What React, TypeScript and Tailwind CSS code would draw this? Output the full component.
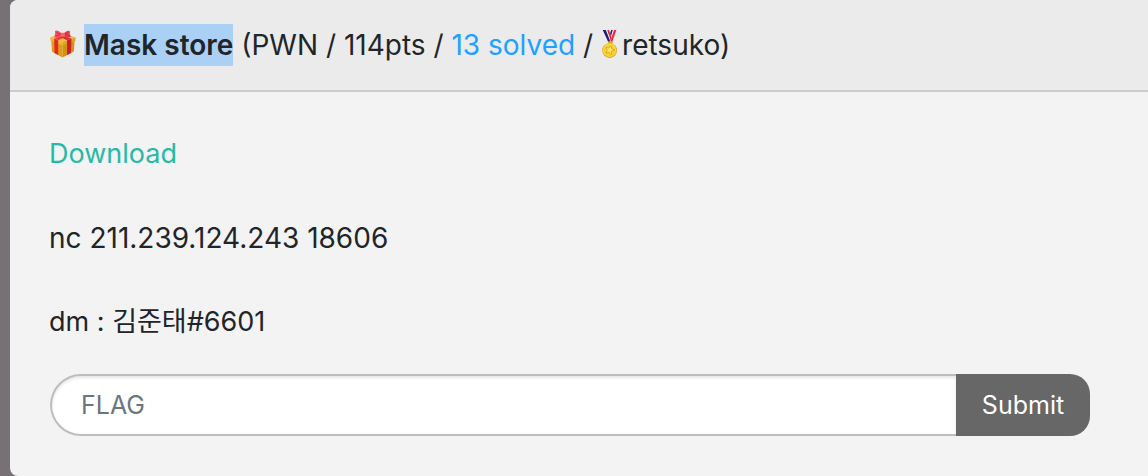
function GiftIcon() {
  return (
    <svg viewBox="0 0 28 29" className="mb-0.5 mr-[7px] h-7 w-7 shrink-0" role="img" aria-label="Gift">
      <path d="M1.8 10.5 L13.5 15 V28.4 L2.6 22.4 Z" fill="#e09c14" />
      <path d="M13.5 15 L26 10.5 L25.2 22.2 L13.5 28.4 Z" fill="#d3920f" />
      <path d="M.8 7.8 L13.5 3.4 L27.2 7.8 L13.5 12.2 Z" fill="#efba35" />
      <path d="M.8 7.8 L13.5 12.2 V16 L1.2 11.4 Z" fill="#f0b42b" />
      <path d="M27.2 7.8 L13.5 12.2 V16 L26.8 11.4 Z" fill="#dca424" />
      <path d="M4.8 9 L9 10.5 V26 L5.2 23.9 Z" fill="#e02730" />
      <path d="M22.8 9 L18.2 10.5 V25.9 L22.2 23.8 Z" fill="#cc1d28" />
      <path d="M4.8 9 L14 5.6 L17 7 L9 10.5 Z" fill="#e73c44" />
      <path d="M22.8 9 L13.5 5.6 L11 7 L18.2 10.5 Z" fill="#dc2b35" />
      <path d="M12.6 3.6 C10 .6 6.6 -.4 5.6 1.2 C6.4 3.4 5.6 5.2 4.8 7.2 C7.6 8.6 10.6 7.8 12.6 6 Z" fill="#f2515b" />
      <path d="M14.8 3.6 C17.2 .9 20.4 0 21.2 1.6 C20.6 3.6 21.2 5 22.2 7 C19.6 8.4 16.8 7.8 14.8 6 Z" fill="#e83f4a" />
      <path d="M7 2.6 L11.6 4.4 L7 6.2 M20 2.6 L16 4.6 L20.2 6" fill="none" stroke="#c92334" strokeWidth=".7" />
      <rect x="11.6" y="2.8" width="4.4" height="4.2" rx="1.4" fill="#f5656d" />
    </svg>
  );
}

function MedalIcon() {
  return (
    <svg viewBox="0 0 18 30" className="mb-0.5 ml-2 mr-[3px] h-7 w-[18px] shrink-0" role="img" aria-label="Gold medal">
      <path d="M10.4 0 H15.8 L11.2 12.5 H7.4 Z" fill="#fff" />
      <path d="M10.2 0 H12 L9.4 9 L8 7 Z" fill="#1b2a86" />
      <path d="M13.2 0 H15.8 L11.4 12.5 H9.2 Z" fill="#ee2436" />
      <path d="M1.2 0 H7.8 L11.6 12.5 H7 Z" fill="#fff" />
      <path d="M1.2 0 H4.6 L9.4 12.5 H7 Z" fill="#181f7a" />
      <path d="M6 0 H8 L11.8 12.5 H10 Z" fill="#ee2436" />
      <rect x="7" y="12" width="4.8" height="3.2" rx="1" fill="#d9a21e" />
      <circle cx="8.6" cy="22" r="7.9" fill="#d3a021" />
      <circle cx="8.6" cy="21.6" r="7.3" fill="#f8d83e" />
      <circle cx="8.6" cy="22" r="5.9" fill="#f6cf33" />
      <path d="M10.4 16.6 L10.6 20 L13.8 21.4 L10.6 22.8 L10.4 26.4 L8 23.8 L4.6 24.6 L6.2 21.6 L4.4 18.8 L7.8 19.4 Z" fill="#ffe766" stroke="#cc961d" strokeWidth=".7" />
    </svg>
  );
}

export default function App() {
  return (
    <div className="bg-[#777074] pl-[10px] font-['Inter','Noto_Sans_CJK_KR',sans-serif] text-[27px] leading-[42px] text-[#212529]">
      <main className="overflow-hidden rounded-l-lg bg-[#f3f3f3]">
        <header className="flex items-center border-b-2 border-[#cccccc] bg-[#ebebeb] py-6 pl-[39px] pr-[58px] text-[28px]">
          <GiftIcon />
          <h1 className="flex items-center whitespace-pre">
            <strong className="bg-[#abd0f5] font-semibold">Mask store</strong>
            <span> (PWN / 114pts / </span>
            <a href="#solved" className="text-[#1ea1ff]">13 solved</a>
            <span> /</span>
            <MedalIcon />
            <span>retsuko)</span>
          </h1>
        </header>
        <section className="pb-10 pl-[39px] pr-[58px] pt-[41px]">
          <div className="flex flex-col gap-[42px]">
            <a href="#download" className="self-start text-[#27b9a7]">Download</a>
            <p className="text-[28px]">nc 211.239.124.243 18606</p>
            <p>dm : 김준태#6601</p>
          </div>
          <form className="ml-px mt-[31px] flex h-[62px] text-[25px]" onSubmit={(e) => e.preventDefault()}>
            <input
              type="text"
              aria-label="Flag"
              placeholder="FLAG"
              className="min-w-0 flex-1 rounded-l-full border-2 border-r-0 border-[#bdbdbd] bg-white px-[29px] shadow-[inset_0_2px_3px_rgba(0,0,0,0.1)] placeholder:text-[#6c757d]"
            />
            <button type="submit" className="w-[134px] rounded-r-[20px] bg-[#676767] text-white">
              Submit
            </button>
          </form>
        </section>
      </main>
    </div>
  );
}
